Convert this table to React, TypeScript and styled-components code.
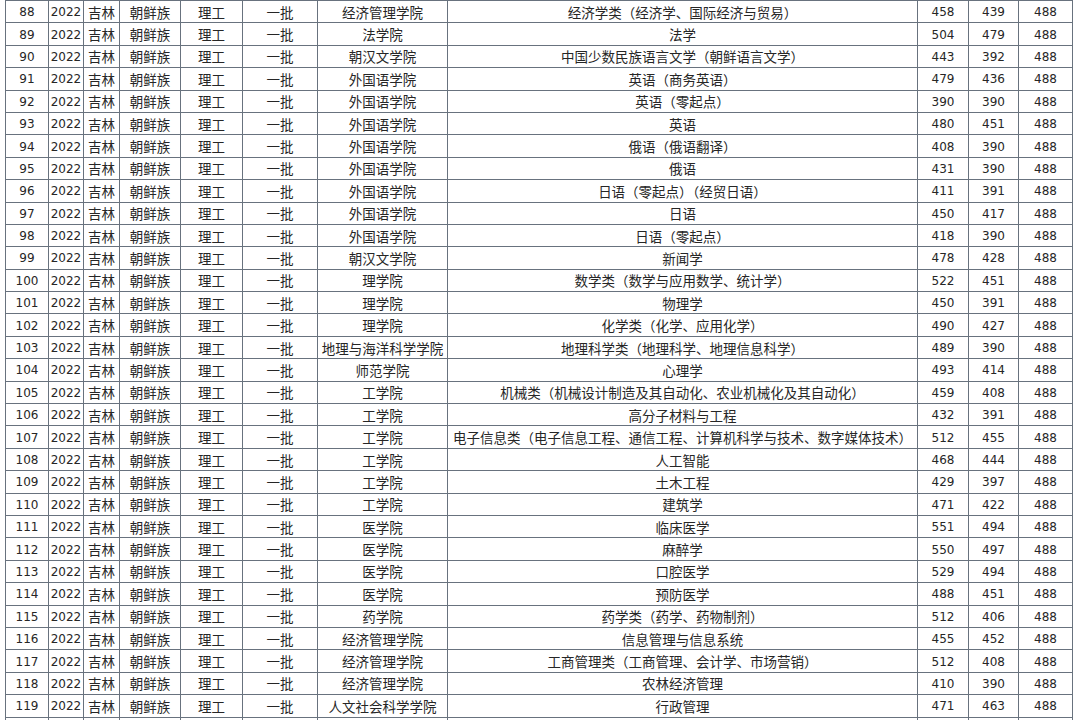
import React from 'react';
import styled, { createGlobalStyle } from 'styled-components';

const GlobalStyle = createGlobalStyle`
  html, body {
    margin: 0;
    padding: 0;
    background: #fff;
    overflow: hidden;
  }
`;

const COL_WIDTHS = [43, 35, 36, 61, 62, 75, 130, 470, 51, 50, 54];

type Row = [number, string, string, number, number];

const ROWS: Row[] = [
  [88, '经济管理学院', '经济学类（经济学、国际经济与贸易）', 458, 439],
  [89, '法学院', '法学', 504, 479],
  [90, '朝汉文学院', '中国少数民族语言文学（朝鲜语言文学）', 443, 392],
  [91, '外国语学院', '英语（商务英语）', 479, 436],
  [92, '外国语学院', '英语（零起点）', 390, 390],
  [93, '外国语学院', '英语', 480, 451],
  [94, '外国语学院', '俄语（俄语翻译）', 408, 390],
  [95, '外国语学院', '俄语', 431, 390],
  [96, '外国语学院', '日语（零起点）（经贸日语）', 411, 391],
  [97, '外国语学院', '日语', 450, 417],
  [98, '外国语学院', '日语（零起点）', 418, 390],
  [99, '朝汉文学院', '新闻学', 478, 428],
  [100, '理学院', '数学类（数学与应用数学、统计学）', 522, 451],
  [101, '理学院', '物理学', 450, 391],
  [102, '理学院', '化学类（化学、应用化学）', 490, 427],
  [103, '地理与海洋科学学院', '地理科学类（地理科学、地理信息科学）', 489, 390],
  [104, '师范学院', '心理学', 493, 414],
  [105, '工学院', '机械类（机械设计制造及其自动化、农业机械化及其自动化）', 459, 408],
  [106, '工学院', '高分子材料与工程', 432, 391],
  [107, '工学院', '电子信息类（电子信息工程、通信工程、计算机科学与技术、数字媒体技术）', 512, 455],
  [108, '工学院', '人工智能', 468, 444],
  [109, '工学院', '土木工程', 429, 397],
  [110, '工学院', '建筑学', 471, 422],
  [111, '医学院', '临床医学', 551, 494],
  [112, '医学院', '麻醉学', 550, 497],
  [113, '医学院', '口腔医学', 529, 494],
  [114, '医学院', '预防医学', 488, 451],
  [115, '药学院', '药学类（药学、药物制剂）', 512, 406],
  [116, '经济管理学院', '信息管理与信息系统', 455, 452],
  [117, '经济管理学院', '工商管理类（工商管理、会计学、市场营销）', 512, 408],
  [118, '经济管理学院', '农林经济管理', 410, 390],
  [119, '人文社会科学学院', '行政管理', 471, 463],
];

const Sheet = styled.table`
  margin-left: 5px;
  width: 1068px;
  table-layout: fixed;
  border-collapse: collapse;
  color: #262626;
`;

const Line = styled.tr`
  height: 22.4px;
`;

const Cell = styled.td<{ $numeric?: boolean }>`
  border: 1px solid #68727e;
  padding: ${(p) => (p.$numeric ? '1px 1px 0' : '0 1px')};
  text-align: center;
  vertical-align: middle;
  white-space: nowrap;
  overflow: hidden;
  line-height: 20px;
  font-family: ${(p) =>
    p.$numeric ? '"DejaVu Sans", "Noto Sans CJK SC", sans-serif' : '"Noto Sans CJK SC", sans-serif'};
  font-size: ${(p) => (p.$numeric ? '12px' : '13.5px')};
`;

export default function App() {
  return (
    <>
      <GlobalStyle />
      <Sheet>
        <colgroup>
          {COL_WIDTHS.map((w, i) => (
            <col key={i} style={{ width: w }} />
          ))}
        </colgroup>
        <tbody>
          {ROWS.map(([no, college, major, high, low]) => (
            <Line key={no}>
              <Cell $numeric>{no}</Cell>
              <Cell $numeric>2022</Cell>
              <Cell>吉林</Cell>
              <Cell>朝鲜族</Cell>
              <Cell>理工</Cell>
              <Cell>一批</Cell>
              <Cell>{college}</Cell>
              <Cell>{major}</Cell>
              <Cell $numeric>{high}</Cell>
              <Cell $numeric>{low}</Cell>
              <Cell $numeric>488</Cell>
            </Line>
          ))}
          <Line>
            {COL_WIDTHS.map((_, i) => (
              <Cell key={i} />
            ))}
          </Line>
        </tbody>
      </Sheet>
    </>
  );
}
